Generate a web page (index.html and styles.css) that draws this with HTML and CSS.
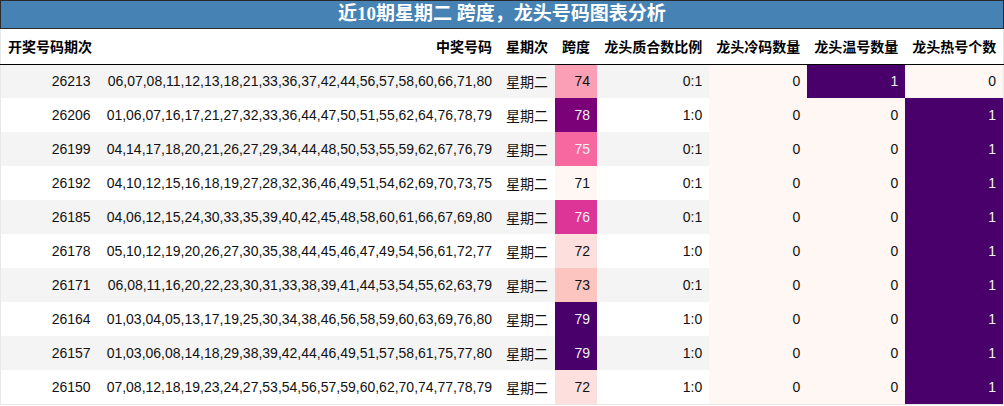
FILE: index.html
```html
<!DOCTYPE html>
<html lang="zh">
<head>
<meta charset="utf-8">
<link rel="stylesheet" href="styles.css">
</head>
<body>
<div class="wrap">
  <div class="title">近10期星期二 跨度，龙头号码图表分析</div>
  <table class="grid">
    <colgroup>
      <col class="c1"><col class="c2"><col class="c3"><col class="c4"><col class="c5"><col class="c6"><col class="c7"><col class="c8">
    </colgroup>
    <thead>
      <tr>
        <th class="left">开奖号码期次</th>
        <th>中奖号码</th>
        <th>星期次</th>
        <th>跨度</th>
        <th>龙头质合数比例</th>
        <th>龙头冷码数量</th>
        <th>龙头温号数量</th>
        <th>龙头热号个数</th>
      </tr>
    </thead>
    <tbody>
      <tr><td>26213</td><td>06,07,08,11,12,13,18,21,33,36,37,42,44,56,57,58,60,66,71,80</td><td>星期二</td><td class="g3">74</td><td>0:1</td><td class="g0">0</td><td class="g8">1</td><td class="g0">0</td></tr>
      <tr><td>26206</td><td>01,06,07,16,17,21,27,32,33,36,44,47,50,51,55,62,64,76,78,79</td><td>星期二</td><td class="g7">78</td><td>1:0</td><td class="g0">0</td><td class="g0">0</td><td class="g8">1</td></tr>
      <tr><td>26199</td><td>04,14,17,18,20,21,26,27,29,34,44,48,50,53,55,59,62,67,76,79</td><td>星期二</td><td class="g4">75</td><td>0:1</td><td class="g0">0</td><td class="g0">0</td><td class="g8">1</td></tr>
      <tr><td>26192</td><td>04,10,12,15,16,18,19,27,28,32,36,46,49,51,54,62,69,70,73,75</td><td>星期二</td><td class="g0">71</td><td>0:1</td><td class="g0">0</td><td class="g0">0</td><td class="g8">1</td></tr>
      <tr><td>26185</td><td>04,06,12,15,24,30,33,35,39,40,42,45,48,58,60,61,66,67,69,80</td><td>星期二</td><td class="g5">76</td><td>0:1</td><td class="g0">0</td><td class="g0">0</td><td class="g8">1</td></tr>
      <tr><td>26178</td><td>05,10,12,19,20,26,27,30,35,38,44,45,46,47,49,54,56,61,72,77</td><td>星期二</td><td class="g1">72</td><td>1:0</td><td class="g0">0</td><td class="g0">0</td><td class="g8">1</td></tr>
      <tr><td>26171</td><td>06,08,11,16,20,22,23,30,31,33,38,39,41,44,53,54,55,62,63,79</td><td>星期二</td><td class="g2">73</td><td>0:1</td><td class="g0">0</td><td class="g0">0</td><td class="g8">1</td></tr>
      <tr><td>26164</td><td>01,03,04,05,13,17,19,25,30,34,38,46,56,58,59,60,63,69,76,80</td><td>星期二</td><td class="g8">79</td><td>1:0</td><td class="g0">0</td><td class="g0">0</td><td class="g8">1</td></tr>
      <tr><td>26157</td><td>01,03,06,08,14,18,29,38,39,42,44,46,49,51,57,58,61,75,77,80</td><td>星期二</td><td class="g8">79</td><td>1:0</td><td class="g0">0</td><td class="g0">0</td><td class="g8">1</td></tr>
      <tr><td>26150</td><td>07,08,12,18,19,23,24,27,53,54,56,57,59,60,62,70,74,77,78,79</td><td>星期二</td><td class="g1">72</td><td>1:0</td><td class="g0">0</td><td class="g0">0</td><td class="g8">1</td></tr>
    </tbody>
  </table>
</div>
</body>
</html>
```

FILE: styles.css
```css
html, body {
  margin: 0;
  padding: 0;
  background: #ffffff;
}

.wrap {
  width: 1004px;
}

.title {
  box-sizing: border-box;
  height: 29px;
  border: 1px solid #2b2b2b;
  background: #4682b4;
  color: #ffffff;
  font-family: "Liberation Serif", "Noto Sans CJK SC", serif;
  font-weight: bold;
  font-size: 19px;
  line-height: 26px;
  text-align: center;
}

.grid {
  width: 1004px;
  table-layout: fixed;
  border-collapse: collapse;
  border-left: 1px solid #e8e8e8;
  border-right: 1px solid #e8e8e8;
  border-bottom: 1px solid #e8e8e8;
  font-family: "Liberation Sans", "Noto Sans CJK SC", sans-serif;
  font-size: 14px;
  color: #111111;
}

.c1 { width: 97px; }
.c2 { width: 401px; }
.c3 { width: 56px; }
.c4 { width: 42px; }
.c5 { width: 112px; }
.c6 { width: 98px; }
.c7 { width: 98px; }
.c8 { width: 98px; }

.grid th {
  height: 35px;
  padding: 0 7px 0 7px;
  text-align: right;
  font-weight: bold;
  white-space: nowrap;
  border-bottom: 1px solid #000000;
  background: #ffffff;
  color: #000000;
  box-sizing: border-box;
}

.grid th.left {
  text-align: left;
}

.grid td {
  height: 34px;
  padding: 0 7px 0 0;
  text-align: right;
  white-space: nowrap;
  box-sizing: border-box;
}

.grid tbody tr:nth-child(odd) {
  background: #f4f4f4;
}

.grid tbody tr:nth-child(even) {
  background: #ffffff;
}

.grid td.g0 { background: #fff7f3; color: #111111; }
.grid td.g1 { background: #fde0dd; color: #111111; }
.grid td.g2 { background: #fcc5c0; color: #111111; }
.grid td.g3 { background: #fa9fb5; color: #111111; }
.grid td.g4 { background: #f768a1; color: #f1f1f1; }
.grid td.g5 { background: #dd3497; color: #f1f1f1; }
.grid td.g7 { background: #7a0177; color: #f1f1f1; }
.grid td.g8 { background: #49006a; color: #f1f1f1; }
```
